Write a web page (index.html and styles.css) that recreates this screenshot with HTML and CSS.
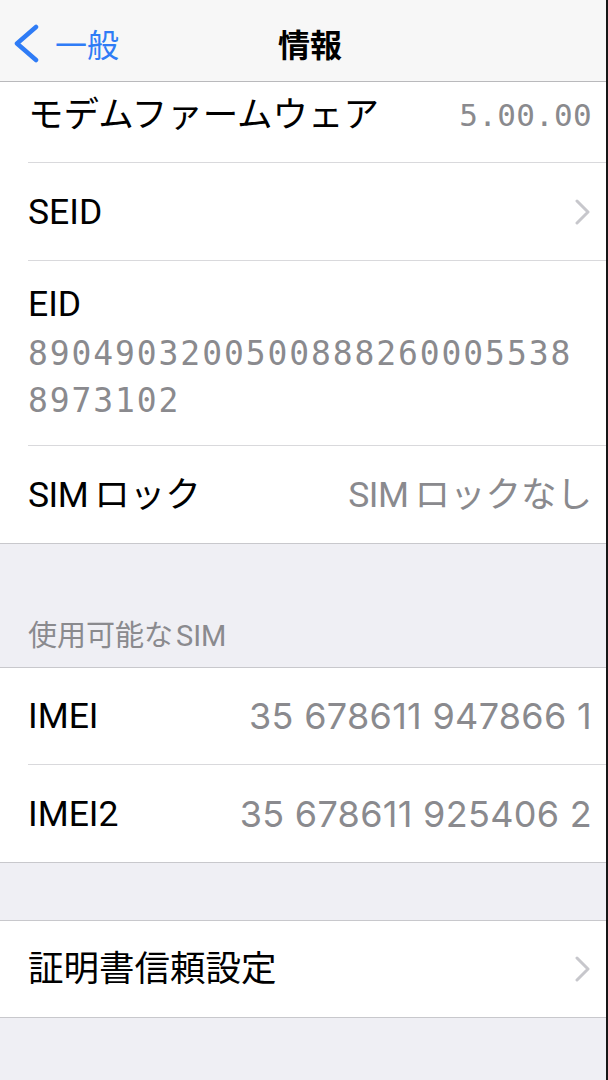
FILE: index.html
```html
<!DOCTYPE html>
<html lang="ja">
<head>
<meta charset="utf-8">
<link rel="stylesheet" href="styles.css">
</head>
<body>
<div class="screen">
  <header class="nav">
    <a class="back">
      <svg class="back-icon" width="30" height="40" viewBox="0 0 30 40"><polyline points="24,4 5,20.5 24,37" fill="none" stroke="#2f7cf6" stroke-width="4.5" stroke-linecap="round" stroke-linejoin="round"/></svg>
      <span class="back-text">一般</span>
    </a>
    <h1 class="title">情報</h1>
  </header>

  <section class="group group-top">
    <div class="row">
      <div class="cell cell-modem">
        <span class="label">モデムファームウェア</span>
        <span class="value mono">5.00.00</span>
      </div>
    </div>
    <div class="row">
      <div class="cell">
        <span class="label">SEID</span>
        <svg class="chev" width="18" height="26" viewBox="0 0 18 26"><polyline points="4,2 15,13 4,24" fill="none" stroke="#c7c7cc" stroke-width="3" stroke-linecap="round" stroke-linejoin="round"/></svg>
      </div>
    </div>
    <div class="row">
      <div class="cell cell-stack">
        <span class="label">EID</span>
        <span class="eid mono">8904903200500888260005538<br>8973102</span>
      </div>
    </div>
    <div class="row">
      <div class="cell">
        <span class="label"><span class="lat">SIM</span>ロック</span>
        <span class="value"><span class="lat">SIM</span>ロックなし</span>
      </div>
    </div>
  </section>

  <div class="section-header"><span>使用可能な</span><span class="lat-sm">SIM</span></div>

  <section class="group">
    <div class="row">
      <div class="cell cell-short">
        <span class="label">IMEI</span>
        <span class="value num">35 678611 947866 1</span>
      </div>
    </div>
    <div class="row">
      <div class="cell">
        <span class="label">IMEI2</span>
        <span class="value num">35 678611 925406 2</span>
      </div>
    </div>
  </section>

  <div class="spacer"></div>

  <section class="group">
    <div class="row">
      <div class="cell cell-short">
        <span class="label">証明書信頼設定</span>
        <svg class="chev" width="18" height="26" viewBox="0 0 18 26"><polyline points="4,2 15,13 4,24" fill="none" stroke="#c7c7cc" stroke-width="3" stroke-linecap="round" stroke-linejoin="round"/></svg>
      </div>
    </div>
  </section>
</div>
</body>
</html>
```

FILE: styles.css
```css
html, body {
  margin: 0;
  padding: 0;
  background: #efeff4;
}

.screen {
  width: 606px;
  min-height: 1080px;
  background: #efeff4;
  border-right: 2px solid #161616;
  font-family: Roboto, "Noto Sans CJK JP", sans-serif;
  color: #000;
}

.nav {
  height: 81px;
  background: #f7f7f7;
  border-bottom: 1px solid #b9b9bc;
  display: grid;
  grid-template-columns: 1fr auto 1fr;
  align-items: center;
}

.back {
  display: flex;
  align-items: center;
  gap: 13px;
  padding-left: 12px;
  padding-top: 4px;
  color: #2f7cf6;
}

.back-icon {
  display: block;
}

.back-text {
  font-family: "Noto Sans CJK JP", sans-serif;
  font-size: 32px;
  line-height: 40px;
}

.title {
  margin: 0;
  padding-top: 4px;
  padding-left: 14px;
  font-family: "Noto Sans CJK JP", sans-serif;
  font-size: 32px;
  font-weight: 700;
  line-height: 40px;
}

.group {
  background: #fff;
  border-top: 1px solid #c8c8cc;
  border-bottom: 1px solid #c8c8cc;
}

.group-top {
  border-top: none;
}

.row {
  padding-left: 28px;
}

.cell {
  height: 97px;
  display: flex;
  align-items: center;
  justify-content: space-between;
  padding-right: 14px;
  border-bottom: 1px solid #d9d9dc;
}

.row:last-child .cell {
  border-bottom: none;
}

.cell-short {
  height: 96px;
}

.cell-modem {
  height: 67px;
  align-items: flex-start;
  padding-top: 13px;
}

.cell-stack {
  height: auto;
  flex-direction: column;
  align-items: flex-start;
  justify-content: flex-start;
  padding-top: 23px;
  padding-bottom: 21px;
}

.label {
  font-size: 35.5px;
  line-height: 40px;
  white-space: nowrap;
}

.value {
  font-size: 35.5px;
  line-height: 40px;
  color: #8a8a8e;
  white-space: nowrap;
}

.lat {
  letter-spacing: -0.5px;
  margin-right: 6px;
}

.mono {
  font-family: "DejaVu Sans Mono", monospace;
  font-size: 31px;
  letter-spacing: 0.3px;
}

.eid {
  margin-top: 6px;
  font-size: 33px;
  line-height: 47px;
  letter-spacing: 1.9px;
  color: #8a8a8e;
}

.num {
  font-family: Inter, sans-serif;
  font-size: 36px;
  letter-spacing: 0.3px;
}

.chev {
  display: block;
  margin-right: 1px;
}

.section-header {
  height: 34px;
  padding: 72px 0 17px 28px;
  font-family: "Noto Sans CJK JP", sans-serif;
  font-size: 29px;
  line-height: 34px;
  color: #8a8a8e;
}

.lat-sm {
  font-family: Roboto, sans-serif;
  margin-left: 3px;
}

.spacer {
  height: 57px;
}
```
